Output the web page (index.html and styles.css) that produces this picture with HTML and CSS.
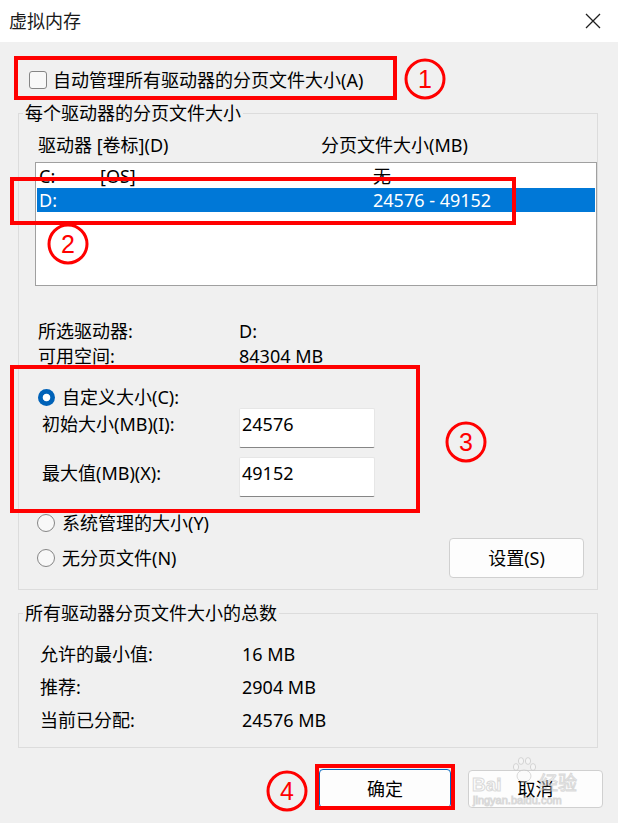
FILE: index.html
```html
<!DOCTYPE html>
<html lang="zh-CN">
<head>
<meta charset="utf-8">
<title>虚拟内存</title>
<link rel="stylesheet" href="styles.css">
</head>
<body>
<div class="dialog">
  <header class="titlebar">
    <span class="title">虚拟内存</span>
    <svg class="close" viewBox="0 0 16 16" aria-hidden="true"><path d="M1 1L15 15M15 1L1 15" stroke="#1f1f1f" stroke-width="1.3" fill="none"/></svg>
  </header>

  <main class="content">
    <div class="auto-row"><span class="checkbox"></span><span>自动管理所有驱动器的分页文件大小(A)</span></div>

    <fieldset class="group group-drives">
      <legend>每个驱动器的分页文件大小</legend>
      <div class="g-body">
        <div class="col-heads"><span>驱动器 [卷标](D)</span><span>分页文件大小(MB)</span></div>
        <div class="listbox">
          <div class="lrow"><span>C:</span><span>[OS]</span><span>无</span></div>
          <div class="lrow selected"><span>D:</span><span></span><span>24576 - 49152</span></div>
        </div>
        <div class="info">
          <div class="kv"><span>所选驱动器:</span><span>D:</span></div>
          <div class="kv"><span>可用空间:</span><span>84304 MB</span></div>
        </div>
        <div class="radio-row first"><span class="radio on"></span><span>自定义大小(C):</span></div>
        <div class="size-grid">
          <span class="size-label">初始大小(MB)(I):</span>
          <div class="textbox">24576</div>
          <span class="size-label">最大值(MB)(X):</span>
          <div class="textbox">49152</div>
        </div>
        <div class="radio-row sys"><span class="radio"></span><span>系统管理的大小(Y)</span></div>
        <div class="radio-row none"><span class="radio"></span><span>无分页文件(N)</span><button class="btn set-btn">设置(S)</button></div>
      </div>
    </fieldset>

    <fieldset class="group group-total">
      <legend>所有驱动器分页文件大小的总数</legend>
      <div class="t-body">
        <div class="trow"><span>允许的最小值:</span><span>16 MB</span></div>
        <div class="trow"><span>推荐:</span><span>2904 MB</span></div>
        <div class="trow"><span>当前已分配:</span><span>24576 MB</span></div>
      </div>
    </fieldset>

    <div class="actions">
      <button class="btn ok-btn">确定</button>
      <button class="btn cancel-btn">取消</button>
    </div>
  </main>

  <svg class="annotations" viewBox="0 0 618 823" aria-hidden="true">
    <g class="red-boxes">
      <rect x="16" y="58" width="379" height="40"/>
      <rect x="12" y="179" width="502" height="44"/>
      <rect x="12" y="367" width="406" height="144"/>
      <rect x="317" y="766" width="136" height="42"/>
    </g>
    <g class="red-circles">
      <circle cx="425" cy="79" r="19"/>
      <circle cx="68" cy="244" r="19"/>
      <circle cx="466" cy="442" r="19"/>
      <circle cx="287" cy="791" r="19"/>
    </g>
    <g class="red-nums">
      <text x="425" y="88">1</text>
      <text x="68" y="253">2</text>
      <text x="466" y="451">3</text>
      <text x="287" y="800">4</text>
    </g>
    <g class="watermark">
      <text class="wm-bai" x="472" y="791">Bai</text>
      <g class="paw">
        <ellipse cx="524" cy="776" rx="7" ry="6"/>
        <ellipse cx="516" cy="767" rx="2.6" ry="3.4"/>
        <ellipse cx="521" cy="761" rx="2.6" ry="3.4"/>
        <ellipse cx="528" cy="761" rx="2.6" ry="3.4"/>
        <ellipse cx="533" cy="767" rx="2.6" ry="3.4"/>
      </g>
      <text class="wm-jy" x="539" y="790">经验</text>
      <text class="wm-url" x="473" y="804">jingyan.baidu.com</text>
    </g>
  </svg>
</div>
</body>
</html>
```

FILE: styles.css
```css
* { box-sizing: border-box; }
html, body { margin: 0; padding: 0; }
body {
  width: 618px;
  height: 823px;
  overflow: hidden;
  background: #f0f0f0;
  font-family: "Noto Sans", "Noto Sans CJK SC", sans-serif;
  font-size: 18px;
  color: #000;
}
.dialog { position: relative; width: 618px; height: 823px; }

.titlebar {
  height: 42px;
  background: #fff;
  display: flex;
  align-items: center;
  justify-content: space-between;
  padding: 0 17px 0 9px;
}
.title { line-height: 24px; color: #1a1a1a; }
.close { width: 16px; height: 16px; display: block; }

.content { padding: 0 20px 0 18px; }

.auto-row {
  display: flex;
  align-items: center;
  gap: 6px;
  height: 26px;
  margin: 25px 0 0 11px;
  line-height: 26px;
}
.checkbox {
  width: 18px;
  height: 18px;
  border: 1px solid #858585;
  border-radius: 3px;
  background: #f8f8f8;
  flex: none;
}

.group {
  margin: 0;
  padding: 0;
  border: 1px solid #dcdcdc;
  min-width: 0;
}
.group legend {
  margin-left: 4px;
  padding: 0 2px;
  line-height: 24px;
}
.group-drives { margin-top: 8px; }
.group-total { margin-top: 11px; }

.g-body { padding: 0 0 11px 16px; }

.col-heads {
  display: grid;
  grid-template-columns: 283px 1fr;
  padding-left: 3px;
  margin-top: 8px;
  line-height: 24px;
}

.listbox {
  margin-top: 5px;
  height: 124px;
  border: 1px solid #a0a0a0;
  background: #fff;
  padding: 1px;
}
.lrow {
  display: grid;
  grid-template-columns: 61px 273px 1fr;
  padding-left: 2px;
  line-height: 24px;
  height: 24px;
}
.lrow.selected { background: #0078d7; color: #fff; }

.info { margin-top: 33px; }
.kv {
  display: grid;
  grid-template-columns: 201px 1fr;
  padding-left: 3px;
  line-height: 25px;
  height: 25px;
}

.radio-row {
  display: flex;
  align-items: center;
  padding-left: 2px;
  line-height: 24px;
}
.radio-row.first { margin-top: 17px; height: 22px; }
.radio-row.sys { margin-top: 14px; height: 24px; }
.radio-row.none { margin-top: 3px; height: 40px; }
.radio {
  width: 18px;
  height: 18px;
  border: 1px solid #858585;
  border-radius: 50%;
  background: #f8f8f8;
  flex: none;
  margin-right: 7px;
}
.radio.on {
  width: 17px;
  height: 17px;
  margin: 0 7px 0 1px;
  border: none;
  background: radial-gradient(circle, #fff 0 3.4px, #0062b8 4.2px);
}

.size-grid {
  display: grid;
  grid-template-columns: 197px 136px;
  grid-auto-rows: 40px;
  row-gap: 9px;
  padding-left: 7px;
}
.size-label { padding-top: 4px; line-height: 24px; }
.textbox {
  background: #fff;
  border: 1px solid #e6e6e6;
  border-bottom-color: #868686;
  border-radius: 2px;
  padding: 3px 0 0 2px;
  line-height: 24px;
}

.btn {
  font: inherit;
  color: #000;
  background: #fdfdfd;
  border: 1px solid #d0d0d0;
  border-radius: 4px;
  padding: 0;
  line-height: 24px;
}
.set-btn {
  margin-left: auto;
  margin-right: 13px;
  width: 135px;
  height: 40px;
}

.t-body { padding: 13px 0 10px 21px; }
.trow {
  display: grid;
  grid-template-columns: 202px 1fr;
  line-height: 33px;
  height: 33px;
}

.actions {
  display: flex;
  justify-content: flex-end;
  gap: 17px;
  margin: 21px -5px 0 0;
}
.ok-btn { width: 132px; height: 39px; border-color: #0067c0; }
.cancel-btn { width: 135px; height: 38px; margin-top: 1px; }

.annotations {
  position: absolute;
  left: 0;
  top: 0;
  width: 618px;
  height: 823px;
  pointer-events: none;
}
.red-boxes rect { fill: none; stroke: #ff0000; stroke-width: 4; }
.red-circles circle { fill: none; stroke: #ff0000; stroke-width: 3; }
.red-nums text {
  fill: #ff0000;
  font-family: "Liberation Sans", sans-serif;
  font-size: 25px;
  text-anchor: middle;
}
.watermark { opacity: 0.55; }
.watermark text, .paw ellipse {
  fill: #fafafa;
  stroke: #bdbdbd;
  stroke-width: 1;
}
.wm-bai { font-family: "Liberation Sans", sans-serif; font-weight: bold; font-size: 19px; }
.wm-jy { font-family: "Noto Sans CJK SC", sans-serif; font-size: 19px; }
.wm-url { font-family: "Liberation Sans", sans-serif; font-size: 11px; stroke-width: 0.6; }
```
